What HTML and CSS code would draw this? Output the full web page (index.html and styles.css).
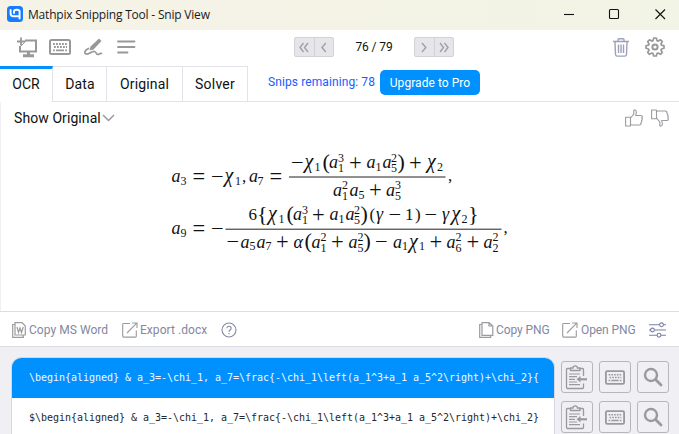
FILE: index.html
```html
<!DOCTYPE html>
<html lang="en">
<head>
<meta charset="utf-8">
<title>Mathpix Snipping Tool - Snip View</title>
<link rel="stylesheet" href="styles.css">
</head>
<body>
<svg class="defs" width="0" height="0" aria-hidden="true">
  <symbol id="kbd" viewBox="0 0 22 16"><rect x="1" y="1" width="20" height="14" rx="1.5" fill="none" stroke="currentColor" stroke-width="2"/><path d="M4 5h14M5 8h13" stroke="currentColor" stroke-width="1.8" stroke-dasharray="1.8 1.2"/><path d="M4 11.3h1.8M7 11.3h8M16.200 11.300h1.800" stroke="currentColor" stroke-width="1.800"/></symbol>
  <symbol id="clip" viewBox="0 0 24 26"><path d="M6 4.500H2.500a1 1 0 0 0-1 1v18a1 1 0 0 0 1 1h15a1 1 0 0 0 1-1V19.500M18.500 12V5.500a1 1 0 0 0-1-1H14M5.500 6.500V4H8a2.200 2.200 0 0 1 4.400 0H15v2.500z" fill="none" stroke="currentColor" stroke-width="1.300"/><path d="M4 10h11M4 12.700h8M4 15.300h6M4 18h8M4 20.700h11" stroke="currentColor" stroke-width="1.200"/><path d="M22 15.300h-8" stroke="currentColor" stroke-width="2.200"/><path d="M11.500 15.300l4-3.300v6.600z" fill="currentColor"/></symbol>
  <symbol id="mag" viewBox="0 0 20 20"><circle cx="8" cy="8" r="6" fill="none" stroke="currentColor" stroke-width="2.400"/><path d="M12.500 12.500l5.500 5.500" stroke="currentColor" stroke-width="2.800" stroke-linecap="round"/></symbol>
  <symbol id="open" viewBox="0 0 16 16"><path d="M8 1.500H1.500a.8.800 0 0 0-.8.800v12a.8.800 0 0 0 .8.800h12a.8.800 0 0 0 .8-.8V8.500M5 11L14.700 1.200M10 1h5v5" fill="none" stroke="currentColor" stroke-width="1.100"/></symbol>
  <symbol id="thumb" viewBox="0 0 18 18"><path d="M.6 8.300h4.900v8.700H.6zM5.500 9L8.800 5.200V1.600C8.800.400 11.400.500 11.400 3.200L10.700 6.500H16c1.600 0 1.700 2 .6 2.500 1 .5.900 2-.2 2.400.7.700.4 2-.6 2.300.5 1-.2 2.300-1.300 2.300H7.500L5.500 15.500" fill="none" stroke="currentColor" stroke-width="1.100" stroke-linejoin="round"/></symbol>
</svg>
<div class="window">
  <header class="titlebar">
    <svg class="logo" width="16" height="16" viewBox="0 0 16 16"><rect width="16" height="16" rx="3.500" fill="#187cff"/><path d="M3.600 4v3.500q0 2.700 2.700 2.700H12.600M7 7V5.400q0-1.700 2.800-1.700T12.600 5.400V12.600" fill="none" stroke="#fff" stroke-width="1.900" stroke-linecap="round"/></svg>
    <span class="title">Mathpix Snipping Tool - Snip View</span>
    <svg class="winctl" width="102" height="12" viewBox="0 0 102 12" fill="none" stroke="#111" stroke-width="1.100"><path d="M0 6.500h10"/><rect x="45.500" y="1.500" width="9" height="9" rx="1"/><path d="M91.500 1.500l9.500 9.500M101 1.500L91.500 11"/></svg>
  </header>

  <div class="toolbar">
    <div class="tools">
      <svg width="22" height="21" viewBox="0 0 22 21" fill="none" stroke="currentColor"><path d="M8 3.500h11v11H3V9" stroke-width="2"/><path d="M0 4.500h8M4 .5v8" stroke-width="1.800"/><path d="M4 9l4.500-4.500" stroke-width="1"/><path d="M11.500 15v3M6 18.700h11" stroke-width="3"/></svg>
      <svg width="22" height="16"><use href="#kbd"/></svg>
      <svg width="19" height="18" viewBox="0 0 19 18"><path d="M6.500 8.500L15 .5l2.500 2.500-8 8.500-4 1z" fill="currentColor"/><path d="M4.500 10.500C1 12.200-.5 15 2 16c3.500 1 5-3 8.500-2.500 2 .3 1.500 3.300 3.500 3 1.200-.2 2-1.500 3.500-1" fill="none" stroke="currentColor" stroke-width="1.700" stroke-linecap="round"/></svg>
      <svg width="19" height="14" viewBox="0 0 19 14"><path d="M1 1.500h16.500M1 7h16.500M1 12.500h9.500" stroke="currentColor" stroke-width="1.800" stroke-linecap="round"/></svg>
    </div>
    <div class="pager">
      <div class="pair"><span><svg width="10" height="11" viewBox="0 0 10 11"><path d="M4.500 1L1 5.500 4.500 10M9 1L5.500 5.500 9 10"/></svg></span><span><svg width="6" height="11" viewBox="0 0 6 11"><path d="M4.800 1L1 5.500 4.800 10"/></svg></span></div>
      <span class="count">76 / 79</span>
      <div class="pair"><span><svg width="6" height="11" viewBox="0 0 6 11"><path d="M1 1l3.800 4.500L1 10"/></svg></span><span><svg width="10" height="11" viewBox="0 0 10 11"><path d="M1 1l3.500 4.500L1 10M5.500 1L9 5.500 5.500 10"/></svg></span></div>
    </div>
    <div class="right-tools">
      <svg class="trash" width="16" height="19" viewBox="0 0 16 19" fill="none" stroke="currentColor" stroke-width="1.400"><path d="M0 3.500h16M5 3V1.500Q5 .7 6 .7h4q1 0 1 .8V3M2 4l.5 12.500q.2 1.600 1.700 1.600h7.600q1.500 0 1.700-1.600L14 4M5.500 6.500v8.500M8 6.500v8.500M10.500 6.500v8.500"/></svg>
      <svg width="20" height="20" viewBox="0 0 20 20" fill="none" stroke="currentColor" stroke-linejoin="round"><path stroke-width="1.700" d="M8 3.600 8.700 1h2.600l.7 2.600 1.200.5 2.300-1.300 1.800 1.800L16 6.900l.5 1.200 2.500.7v2.500l-2.500.7-.5 1.200 1.300 2.300-1.800 1.800-2.300-1.300-1.200.5-.7 2.500H8.700L8 16.500 6.800 16l-2.300 1.300-1.800-1.800L4 13.200 3.500 12 1 11.300V8.800l2.500-.7L4 6.900 2.700 4.600l1.800-1.800 2.300 1.300z"/><circle cx="10" cy="10" r="2.600" stroke-width="2"/></svg>
    </div>
  </div>

  <nav class="tabs">
    <span class="tab active">OCR</span><span class="tab data">Data</span><span class="tab orig">Original</span><span class="tab solver">Solver</span>
    <span class="snips">Snips remaining: 78</span>
    <span class="upgrade">Upgrade to Pro</span>
  </nav>

  <main class="result">
    <div class="result-head">
      <span class="show">Show Original</span>
      <svg class="chev" width="13" height="8" viewBox="0 0 13 8"><path d="M1 1l5.500 5.500L12 1" fill="none" stroke="#9a9a9e" stroke-width="1.500"/></svg>
      <span class="thumbs"><svg width="18" height="18"><use href="#thumb"/></svg><svg class="down" width="18" height="18"><use href="#thumb"/></svg></span>
    </div>
    <svg class="formula" width="345" height="120" viewBox="168 140 345 120">
      <text><tspan class="v" x="171.500" y="182">a</tspan><tspan class="s" x="180.500" y="184.500">3</tspan><tspan class="o" x="192.500" y="183.500">=</tspan><tspan class="o" x="211" y="183.500">−</tspan><tspan class="c" x="224.500" y="182">χ</tspan><tspan class="s" x="235" y="184.500">1</tspan><tspan class="n" x="242" y="182">,</tspan><tspan class="v" x="249" y="182">a</tspan><tspan class="s" x="257.500" y="184.500">7</tspan><tspan class="o" x="269.500" y="183.500">=</tspan></text>
      <text><tspan class="o" x="291" y="169.500">−</tspan><tspan class="c" x="304.500" y="168">χ</tspan><tspan class="s" x="314.500" y="170.500">1</tspan><tspan class="p" x="322.500" y="168.500">(</tspan><tspan class="v" x="329" y="168">a</tspan><tspan class="s" x="338" y="161.500">3</tspan><tspan class="s" x="338" y="171.500">1</tspan><tspan class="o" x="349" y="169.500">+</tspan><tspan class="v" x="366.500" y="168">a</tspan><tspan class="s" x="375.500" y="170.500">1</tspan><tspan class="v" x="382.500" y="168">a</tspan><tspan class="s" x="391" y="161.500">2</tspan><tspan class="s" x="391" y="171.500">5</tspan><tspan class="p" x="397.500" y="168.500">)</tspan><tspan class="o" x="409" y="169.500">+</tspan><tspan class="c" x="427" y="168">χ</tspan><tspan class="s" x="437" y="170.500">2</tspan></text>
      <path d="M289 177h156.500M225.500 229.200H501.500"/>
      <text><tspan class="v" x="333" y="195.500">a</tspan><tspan class="s" x="342" y="189">2</tspan><tspan class="s" x="342" y="199.500">1</tspan><tspan class="v" x="349.500" y="195.500">a</tspan><tspan class="s" x="358.500" y="198.500">5</tspan><tspan class="o" x="369" y="197">+</tspan><tspan class="v" x="386" y="195.500">a</tspan><tspan class="s" x="395" y="189">3</tspan><tspan class="s" x="395" y="199.500">5</tspan><tspan class="n" x="448" y="180.500">,</tspan></text>
      <text><tspan class="v" x="171.500" y="234">a</tspan><tspan class="s" x="180.500" y="236.500">9</tspan><tspan class="o" x="192.500" y="235.500">=</tspan><tspan class="o" x="211" y="235.500">−</tspan></text>
      <text><tspan class="n" x="248.500" y="220">6</tspan><tspan class="p" x="257" y="220.500">{</tspan><tspan class="c" x="268" y="220">χ</tspan><tspan class="s" x="278.500" y="222.500">1</tspan><tspan class="p" x="286.500" y="220.500">(</tspan><tspan class="v" x="293" y="220">a</tspan><tspan class="s" x="302" y="213.500">3</tspan><tspan class="s" x="302" y="223.500">1</tspan><tspan class="o" x="312" y="221.500">+</tspan><tspan class="v" x="329.500" y="220">a</tspan><tspan class="s" x="338.500" y="222.500">1</tspan><tspan class="v" x="345.500" y="220">a</tspan><tspan class="s" x="354" y="213.500">2</tspan><tspan class="s" x="354" y="223.500">5</tspan><tspan class="p" x="360.500" y="220.500">)</tspan><tspan class="n" x="369.500" y="220">(</tspan><tspan class="v" x="376" y="220">γ</tspan><tspan class="o" x="388.500" y="221.500">−</tspan><tspan class="n" x="405" y="220">1</tspan><tspan class="n" x="415" y="220">)</tspan><tspan class="o" x="424.500" y="221.500">−</tspan><tspan class="v" x="442" y="220">γ</tspan><tspan class="c" x="451.500" y="220">χ</tspan><tspan class="s" x="461.500" y="222.500">2</tspan><tspan class="p" x="468" y="220.500">}</tspan></text>
      <text><tspan class="o" x="226.500" y="249">−</tspan><tspan class="v" x="240.500" y="247.500">a</tspan><tspan class="s" x="249.500" y="250">5</tspan><tspan class="v" x="256.500" y="247.500">a</tspan><tspan class="s" x="265.500" y="250">7</tspan><tspan class="o" x="276" y="249">+</tspan><tspan class="v" x="293.500" y="247.500">α</tspan><tspan class="p" x="304.500" y="248">(</tspan><tspan class="v" x="311.500" y="247.500">a</tspan><tspan class="s" x="320.500" y="241">2</tspan><tspan class="s" x="320.500" y="251.500">1</tspan><tspan class="o" x="331" y="249">+</tspan><tspan class="v" x="348.500" y="247.500">a</tspan><tspan class="s" x="357.500" y="241">2</tspan><tspan class="s" x="357.500" y="251.500">5</tspan><tspan class="p" x="363.500" y="248">)</tspan><tspan class="o" x="375" y="249">−</tspan><tspan class="v" x="393" y="247.500">a</tspan><tspan class="s" x="402" y="250">1</tspan><tspan class="c" x="409" y="247.500">χ</tspan><tspan class="s" x="419" y="250">1</tspan><tspan class="o" x="429.500" y="249">+</tspan><tspan class="v" x="446.500" y="247.500">a</tspan><tspan class="s" x="455.500" y="241">2</tspan><tspan class="s" x="455.500" y="251.500">6</tspan><tspan class="o" x="466.500" y="249">+</tspan><tspan class="v" x="483.500" y="247.500">a</tspan><tspan class="s" x="492.500" y="241">2</tspan><tspan class="s" x="492.500" y="251.500">2</tspan><tspan class="n" x="503.500" y="233">,</tspan></text>
    </svg>
  </main>

  <div class="exports">
    <svg width="14" height="16" viewBox="0 0 14 16" fill="none" stroke="currentColor" stroke-width="1.200"><path d="M3 .7h7L13.300 4v9H3zM3 2.500H.7v12.800h10.600V13M5 5l1.500 5.500L8 6l1.500 4.500L11.300 5"/></svg>
    <span class="label word">Copy MS Word</span>
    <svg class="ex" width="16" height="16"><use href="#open"/></svg>
    <span class="label docx">Export .docx</span>
    <svg class="help" width="16" height="16" viewBox="0 0 16 16"><circle cx="8" cy="8" r="7" fill="none" stroke="#8388a5" stroke-width="1.100"/><path d="M5.900 6.300c0-2.900 4.300-2.700 4.300 0C10.200 8 8 7.900 8 9.800M8 11v1.200" fill="none" stroke="#8388a5" stroke-width="1.100"/></svg>
    <svg class="pngs" width="15" height="16" viewBox="0 0 15 16" fill="none" stroke="currentColor" stroke-width="1.200"><path d="M3 .7h7L13.800 4v9.300H3zM3 2.500H.7v12.800h11V13.500M10 .7V4h3.800"/></svg>
    <span class="label cpng">Copy PNG</span>
    <svg class="ex" width="16" height="16"><use href="#open"/></svg>
    <span class="label opng">Open PNG</span>
    <svg class="sliders" width="17" height="16" viewBox="0 0 17 16" fill="#fff" stroke="#7b80a2" stroke-width="1.100"><path d="M0 2.800h17M0 8h17M0 13.200h17"/><circle cx="12.500" cy="2.800" r="1.900"/><circle cx="3.500" cy="8" r="1.900"/><circle cx="10" cy="13.200" r="1.900"/></svg>
  </div>

  <section class="formats">
    <div class="codes">
      <div class="code selected">\begin{aligned} &amp; a_3=-\chi_1, a_7=\frac{-\chi_1\left(a_1^3+a_1 a_5^2\right)+\chi_2}{</div>
      <div class="code">$\begin{aligned} &amp; a_3=-\chi_1, a_7=\frac{-\chi_1\left(a_1^3+a_1 a_5^2\right)+\chi_2}</div>
    </div>
    <div class="actions">
      <span class="btn"><svg width="24" height="26"><use href="#clip"/></svg></span><span class="btn"><svg width="20" height="15"><use href="#kbd"/></svg></span><span class="btn"><svg width="20" height="20"><use href="#mag"/></svg></span>
      <span class="btn"><svg width="24" height="26"><use href="#clip"/></svg></span><span class="btn"><svg width="20" height="15"><use href="#kbd"/></svg></span><span class="btn"><svg width="20" height="20"><use href="#mag"/></svg></span>
    </div>
  </section>
</div>
</body>
</html>
```
FILE: styles.css
```css
* { box-sizing: border-box; }
body { margin: 0; overflow: hidden; background: #fff; font-family: Roboto, "Liberation Sans", sans-serif; color: #111; }
svg { display: block; flex: none; }
.defs { position: absolute; }
.window { width: 679px; height: 434px; overflow: hidden; display: flex; flex-direction: column; }
.window > * { flex: none; }
span { white-space: nowrap; }

.titlebar { height: 30px; padding: 0 13px 2px 7px; display: flex; align-items: center; background: linear-gradient(90deg, #f6f2e7, #f2f4e5); }
.title { margin-left: 5px; font: 12px "Open Sans", sans-serif; letter-spacing: -0.2px; color: #1b1b1b; }
.winctl { margin-left: auto; }

.toolbar { height: 36px; display: flex; align-items: center; color: #98989b; }
.tools { display: flex; align-items: center; gap: 13px; width: 294px; padding-left: 17px; padding-bottom: 2px; }
.tools svg:nth-child(2) { margin-left: -3px; }
.tools svg:nth-child(4) { margin-left: 1px; }
.pager { display: flex; align-items: center; width: 160px; justify-content: space-between; padding-bottom: 2px; }
.pair { display: flex; width: 40px; height: 20px; border: 1px solid #d2d2d6; border-radius: 2px; background: #e6e6ea; }
.pair span { flex: 1; display: flex; align-items: center; justify-content: center; }
.pair span + span { border-left: 1px solid #d2d2d6; }
.pair path { fill: none; stroke: #a0a0a5; stroke-width: 1.4; }
.count { font-size: 12px; letter-spacing: -0.1px; color: #111; }
.right-tools { margin-left: auto; display: flex; align-items: center; gap: 16px; padding: 0 14px 2px 0; }
.trash { color: #9da1b8; }

.tabs { height: 36px; display: flex; border-bottom: 1px solid #e2e2e8; }
.tab { height: 35px; border-top: 1px solid #e2e2e8; border-right: 1px solid #e2e2e8; display: flex; align-items: center; justify-content: center; font-size: 14px; letter-spacing: 0.1px; }
.active { width: 53px; height: 36px; border-top: 3px solid #0091ff; background: #fff; padding: 0 0 3px; }
.data { width: 54px; padding-left: 1px; }
.orig { width: 76px; letter-spacing: 0.15px; }
.solver { width: 65px; letter-spacing: 0.2px; }
.snips { margin: 9px 0 0 20px; width: 112px; font-size: 12px; line-height: 15px; color: #1a5cff; letter-spacing: 0.1px; }
.upgrade { margin-top: 4px; width: 100px; height: 25px; border-radius: 5px; background: #0091ff; color: #fff; font-size: 12px; line-height: 26px; text-align: center; letter-spacing: 0.05px; }

.result { height: 209px; border-left: 1px solid #f0f0f4; }
.result-head { height: 33px; padding: 0 10px 2px 13px; display: flex; align-items: center; }
.show { font-size: 14px; width: 88px; letter-spacing: 0.08px; }
.thumbs { margin-left: auto; display: flex; gap: 8px; color: #9b9ba0; }
.down { transform: scaleY(-1); }
.formula { margin: 5px 0 0 167px; fill: #111; }
.formula path { stroke: #222; stroke-width: 1; }
.formula text { font-family: "Liberation Serif", serif; }
.v { font-size: 18px; font-style: italic; }
.c { font-size: 20px; font-style: italic; }
.n { font-size: 17px; }
.s { font-size: 12px; }
.o { font-size: 22.5px; }
.p { font-size: 22px; }

.exports { height: 36px; padding: 1px 13px 0 12px; border: 1px solid #dcdce4; border-width: 1px 0; display: flex; align-items: center; color: #9b9ba0; }
.label { font-size: 12px; color: #8287a3; margin-left: 3px; letter-spacing: 0.05px; }
.word { width: 93px; }
.docx { width: 81px; margin-left: 2px; }
.pngs { margin-left: auto; }
.cpng { margin-left: 2px; width: 66px; letter-spacing: -0.1px; }
.opng { width: 68px; letter-spacing: -0.1px; }

.formats { height: 87px; padding: 10px 10px 0 11px; background: #f0f0f4; display: flex; }
.codes { width: 544px; height: 90px; border: 1px solid #d5d8e4; border-radius: 10px 10px 0 0; background: #fff; overflow: hidden; }
.code { height: 40px; padding-left: 17px; line-height: 39px; font-family: "DejaVu Sans Mono", monospace; font-size: 10px; letter-spacing: -0.02px; color: #26262c; white-space: pre; }
.selected { background: #0091ff; color: #f0f8ff; }
.actions { margin: 4px 0 0 6px; display: grid; grid-template-columns: repeat(3, 32px); grid-auto-rows: 32px; gap: 8px 6px; }
.btn { border: 1px solid #b6b6bd; border-radius: 3px; display: flex; align-items: center; justify-content: center; color: #9a9a9e; }
```
